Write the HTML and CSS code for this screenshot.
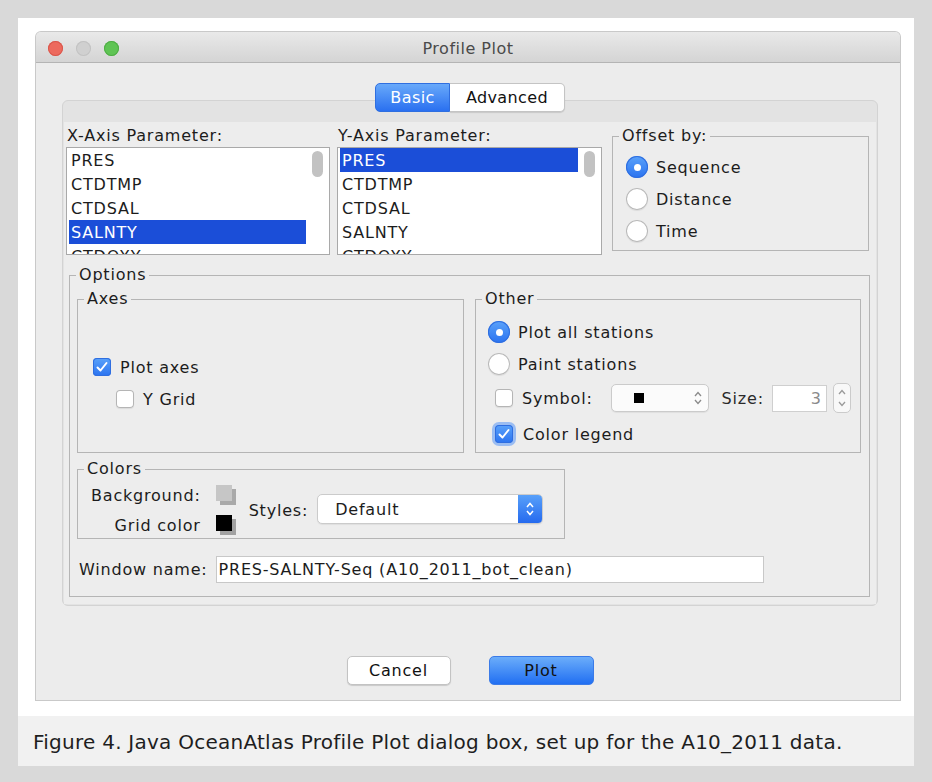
FILE: index.html
```html
<!DOCTYPE html>
<html>
<head>
<meta charset="utf-8">
<title>Profile Plot</title>
<link rel="stylesheet" href="styles.css">
</head>
<body>
<div class="page">
  <div class="card">
    <div class="dialog">
      <div class="titlebar">
        <div class="lights">
          <span class="light red"></span>
          <span class="light gray"></span>
          <span class="light green"></span>
        </div>
        <div class="title">Profile Plot</div>
        <div></div>
      </div>
      <div class="body">
        <div class="tabs">
          <span class="tab active">Basic</span>
          <span class="tab">Advanced</span>
        </div>
        <div class="pane">
          <div class="panel">
            <div class="row1">
              <div class="listcol xcol">
                <div class="label">X-Axis Parameter:</div>
                <div class="list">
                  <div class="rows">
                    <div class="item">PRES</div>
                    <div class="item">CTDTMP</div>
                    <div class="item">CTDSAL</div>
                    <div class="item sel">SALNTY</div>
                    <div class="item">CTDOXY</div>
                  </div>
                  <div class="scroll"><div class="thumb"></div></div>
                </div>
              </div>
              <div class="listcol ycol">
                <div class="label">Y-Axis Parameter:</div>
                <div class="list">
                  <div class="rows">
                    <div class="item sel">PRES</div>
                    <div class="item">CTDTMP</div>
                    <div class="item">CTDSAL</div>
                    <div class="item">SALNTY</div>
                    <div class="item">CTDOXY</div>
                  </div>
                  <div class="scroll"><div class="thumb"></div></div>
                </div>
              </div>
              <fieldset class="group offset">
                <legend>Offset by:</legend>
                <div class="offset-in">
                  <div class="opt"><span class="radio on"></span><span>Sequence</span></div>
                  <div class="opt"><span class="radio"></span><span>Distance</span></div>
                  <div class="opt"><span class="radio"></span><span>Time</span></div>
                </div>
              </fieldset>
            </div>

            <fieldset class="group options">
              <legend>Options</legend>
              <div class="options-in">
                <div class="opt-row">
                  <fieldset class="group axes">
                    <legend>Axes</legend>
                    <div class="axes-in">
                      <div class="opt"><span class="check on"><svg viewBox="0 0 18 18" width="18" height="18"><path d="M4.5 9.5 L7.5 12.5 L13.5 5" fill="none" stroke="#fff" stroke-width="2" stroke-linecap="round" stroke-linejoin="round"/></svg></span><span class="ltxt">Plot axes</span></div>
                      <div class="opt indent"><span class="check"></span><span class="ltxt">Y Grid</span></div>
                    </div>
                  </fieldset>
                  <fieldset class="group other">
                    <legend>Other</legend>
                    <div class="other-in">
                      <div class="opt r32"><span class="radio on"></span><span>Plot all stations</span></div>
                      <div class="opt r32"><span class="radio"></span><span>Paint stations</span></div>
                      <div class="opt r36">
                        <span class="check cb-in"></span><span class="ltxt">Symbol:</span>
                        <span class="combo sym"><span class="square"></span><svg class="chev" viewBox="0 0 10 18" width="10" height="18"><path d="M2 7 L5 3.5 L8 7 M2 11 L5 14.5 L8 11" fill="none" stroke="#8a8a8a" stroke-width="1.3"/></svg></span>
                        <span class="size-lbl">Size:</span>
                        <span class="field sizef">3</span>
                        <span class="spinner"><svg viewBox="0 0 18 30" width="18" height="30"><path d="M6 11 L9 7.5 L12 11 M6 19 L9 22.5 L12 19" fill="none" stroke="#9a9a9a" stroke-width="1.3"/></svg></span>
                      </div>
                      <div class="opt r36">
                        <span class="check on focus cb-in"><svg viewBox="0 0 18 18" width="18" height="18"><path d="M4.5 9.5 L7.5 12.5 L13.5 5" fill="none" stroke="#fff" stroke-width="2" stroke-linecap="round" stroke-linejoin="round"/></svg></span><span class="ltxt cl">Color legend</span>
                      </div>
                    </div>
                  </fieldset>
                </div>

                <fieldset class="group colors">
                  <legend>Colors</legend>
                  <div class="colors-in">
                    <div class="swgrid">
                      <span class="swlbl">Background:</span>
                      <span class="swatch"><span class="sw bgsw"></span></span>
                      <span class="swlbl">Grid color</span>
                      <span class="swatch"><span class="sw gridsw"></span></span>
                    </div>
                    <span class="styles-lbl">Styles:</span>
                    <span class="combo styles"><span class="ctext">Default</span><span class="cbtn"><svg viewBox="0 0 10 18" width="10" height="18"><path d="M2 7 L5 3.5 L8 7 M2 11 L5 14.5 L8 11" fill="none" stroke="#fff" stroke-width="1.5"/></svg></span></span>
                  </div>
                </fieldset>

                <div class="wname">
                  <span>Window name:</span>
                  <span class="field wfield">PRES-SALNTY-Seq (A10_2011_bot_clean)</span>
                </div>
              </div>
            </fieldset>
          </div>
        </div>
        <div class="buttons">
          <span class="btn cancel">Cancel</span>
          <span class="btn plot">Plot</span>
        </div>
      </div>
    </div>
  </div>
  <div class="caption">Figure 4. Java OceanAtlas Profile Plot dialog box, set up for the A10_2011 data.</div>
</div>
</body>
</html>
```
FILE: styles.css
```css
* { box-sizing: border-box; }
html, body { margin: 0; padding: 0; }
body {
  width: 932px;
  height: 782px;
  overflow: hidden;
  background: #d9d9d9;
  font-family: "DejaVu Sans", "Noto Sans", sans-serif;
  font-size: 16px;
  letter-spacing: 0.8px;
  color: #1c1c1c;
}
.page { padding: 18px 18px 0 18px; }
.card {
  background: #ffffff;
  height: 698px;
  padding: 14px 14px 16px 18px;
}
.dialog {
  height: 668px;
  background: #ececec;
  border-radius: 5px 5px 0 0;
  box-shadow: 0 0 0 1px #c9c9c9;
  display: flex;
  flex-direction: column;
}
.titlebar {
  height: 31px;
  padding-top: 2px;
  background: linear-gradient(#e9e9e9, #d4d4d4);
  border-bottom: 1px solid #b4b4b4;
  border-radius: 5px 5px 0 0;
  display: grid;
  grid-template-columns: 1fr auto 1fr;
  align-items: center;
}
.lights { display: flex; gap: 13px; padding-left: 12px; }
.light { width: 15px; height: 15px; border-radius: 50%; display: block; }
.light.red { background: #ed6a5e; box-shadow: inset 0 0 0 1px #d9574c; }
.light.gray { background: #d0d0d0; box-shadow: inset 0 0 0 1px #c2c2c2; }
.light.green { background: #5fc454; box-shadow: inset 0 0 0 1px #4fad45; }
.title { color: #4a4a4a; letter-spacing: 0.5px; }

.body {
  padding: 20px 22px 0 26px;
  display: flex;
  flex-direction: column;
}
.tabs {
  display: flex;
  justify-content: center;
  margin-bottom: -12px;
  position: relative;
  z-index: 1;
}
.tab {
  height: 29px;
  display: flex;
  align-items: center;
  justify-content: center;
  background: #ffffff;
  border: 1px solid #c4c4c4;
  color: #111;
  letter-spacing: 0.4px;
}
.tab.active {
  width: 75px;
  background: linear-gradient(#68a9fa, #2a70f0);
  border-color: #2f6fe0;
  color: #fff;
  border-radius: 5px 0 0 5px;
}
.tab:not(.active) {
  width: 115px;
  border-left: none;
  border-radius: 0 5px 5px 0;
  box-shadow: 0 1px 1px rgba(0,0,0,0.12);
}
.pane {
  height: 506px;
  background: #e3e3e3;
  border: 1px solid #d3d3d3;
  border-radius: 6px;
  padding: 21px 1px 1px 1px;
}
.panel {
  height: 100%;
  background: #ededed;
  padding: 4px 0 0 2px;
}
.row1 { display: flex; align-items: flex-start; }
.label { height: 20px; line-height: 20px; padding-left: 1px; }
.xcol { width: 264px; }
.ycol { width: 265px; margin-left: 7px; }
.list {
  margin-top: 1px;
  height: 108px;
  background: #ffffff;
  border: 1px solid #a9a9a9;
  display: flex;
  overflow: hidden;
}
.rows { flex: 1; padding-left: 2px; overflow: hidden; }
.item {
  height: 24px;
  line-height: 24px;
  padding: 1px 0 0 2px;
  white-space: nowrap;
}
.item.sel { background: #1b4ed8; color: #ffffff; }
.scroll { width: 23px; }
.thumb {
  width: 11px;
  height: 26px;
  margin: 3px 0 0 6px;
  border-radius: 6px;
  background: #c2c2c2;
}

.group {
  margin: 0;
  padding: 0;
  min-width: 0;
  border: 1px solid #b5b5b5;
}
.group > legend {
  margin-left: 6px;
  padding: 0 3px;
  line-height: 20px;
  height: 20px;
}
.group.offset { width: 257px; margin-left: 10px; }
.offset-in { padding: 5px 0 3px 13px; }
.opt { display: flex; align-items: center; height: 32px; }
.radio {
  width: 22px;
  height: 22px;
  border-radius: 50%;
  background: #ffffff;
  box-shadow: inset 0 0 0 1px #b9b9b9, 0 1px 1px rgba(0,0,0,0.08);
  margin-right: 8px;
  flex: none;
  display: flex;
  align-items: center;
  justify-content: center;
}
.radio.on {
  background: linear-gradient(#5aa2fa, #2b73f0);
  box-shadow: inset 0 0 0 1px #2f6ee0;
}
.radio.on::after {
  content: "";
  width: 7px;
  height: 7px;
  border-radius: 50%;
  background: #ffffff;
}
.check {
  width: 18px;
  height: 18px;
  border-radius: 4px;
  background: #ffffff;
  box-shadow: inset 0 0 0 1px #b5b5b5, 0 1px 1px rgba(0,0,0,0.08);
  flex: none;
  display: block;
}
.check svg { display: block; }
.check.on {
  background: linear-gradient(#5aa2fa, #2b73f0);
  box-shadow: inset 0 0 0 1px #2f6ee0;
}
.check.focus { box-shadow: inset 0 0 0 1px #2f6ee0, 0 0 0 3px rgba(88,150,245,0.55); }
.ltxt { margin-left: 9px; }
.ltxt.cl { margin-left: 10px; }

.group.options { width: 801px; margin-top: 10px; margin-left: 3px; }
.options-in { padding: 0 8px 13px 7px; }
.opt-row { display: flex; gap: 11px; margin-top: 4px; }
.group.axes { width: 387px; }
.axes-in { padding: 42px 0 0 15px; }
.opt.indent { padding-left: 23px; }
.group.other { width: 386px; }
.other-in { padding: 7px 0 0 12px; }
.r32 { height: 32px; }
.r36 { height: 36px; }
.cb-in { margin-left: 7px; }
.combo {
  display: flex;
  align-items: center;
  background: #fbfbfb;
  border: 1px solid #cbcbcb;
  border-radius: 5px;
  box-shadow: 0 1px 1px rgba(0,0,0,0.06);
}
.combo.sym {
  width: 98px;
  height: 28px;
  margin-left: 18px;
  padding-left: 22px;
}
.square { width: 10px; height: 10px; background: #000; }
.chev { margin-left: auto; margin-right: 5px; }
.size-lbl { margin-left: 13px; color: #2a2a2a; }
.field {
  background: #ffffff;
  border: 1px solid #cfcfcf;
  display: flex;
  align-items: center;
}
.sizef {
  width: 55px;
  height: 27px;
  margin-left: 8px;
  justify-content: flex-end;
  padding-right: 4px;
  color: #8a8a8a;
}
.spinner {
  width: 18px;
  height: 30px;
  margin-left: 6px;
  border: 1px solid #cbcbcb;
  border-radius: 5px;
  background: #f8f8f8;
  display: block;
  overflow: hidden;
}
.spinner svg { display: block; margin: -1px 0 0 -1px; }

.group.colors { width: 488px; margin-top: 6px; }
.colors-in { display: flex; align-items: center; padding-top: 3px; }
.swgrid {
  display: grid;
  grid-template-columns: auto auto;
  grid-auto-rows: 26px;
  row-gap: 4px;
  column-gap: 15px;
  align-items: center;
  padding-left: 13px;
}
.swlbl { text-align: right; }
.swatch { width: 20px; height: 20px; display: block; }
.sw { width: 16px; height: 16px; display: block; }
.bgsw { background: #c6c6c6; box-shadow: 4px 4px 0 #a9a9a9; }
.gridsw { background: #000000; box-shadow: 4px 4px 0 #a2a2a2; }
.styles-lbl { margin-left: 13px; }
.combo.styles {
  width: 226px;
  height: 30px;
  margin-left: 9px;
  margin-top: -2px;
  background: #ffffff;
  overflow: hidden;
}
.ctext { padding-left: 17px; flex: 1; }
.cbtn {
  width: 24px;
  height: 30px;
  background: linear-gradient(#5aa2fa, #2368ee);
  display: flex;
  align-items: center;
  justify-content: center;
}

.wname { display: flex; align-items: center; margin-top: 17px; margin-left: 2px; height: 27px; }
.wfield {
  width: 548px;
  height: 27px;
  margin-left: 8px;
  padding-left: 2px;
  border-color: #c8c8c8;
}

.buttons {
  display: flex;
  justify-content: center;
  gap: 38px;
  margin-top: 50px;
}
.btn {
  height: 29px;
  border-radius: 5px;
  display: flex;
  align-items: center;
  justify-content: center;
  color: #111;
}
.btn.cancel {
  width: 104px;
  background: #ffffff;
  border: 1px solid #c3c3c3;
  box-shadow: 0 1px 1px rgba(0,0,0,0.15);
}
.btn.plot {
  width: 105px;
  background: linear-gradient(#6badfa, #216ff2);
  border: 1px solid #3b7be8;
}

.caption {
  height: 50px;
  background: #f1f1f1;
  display: flex;
  align-items: center;
  padding: 2px 0 0 15px;
  font-size: 20px;
  letter-spacing: 0.25px;
  color: #1e1e1e;
  white-space: nowrap;
}
```
